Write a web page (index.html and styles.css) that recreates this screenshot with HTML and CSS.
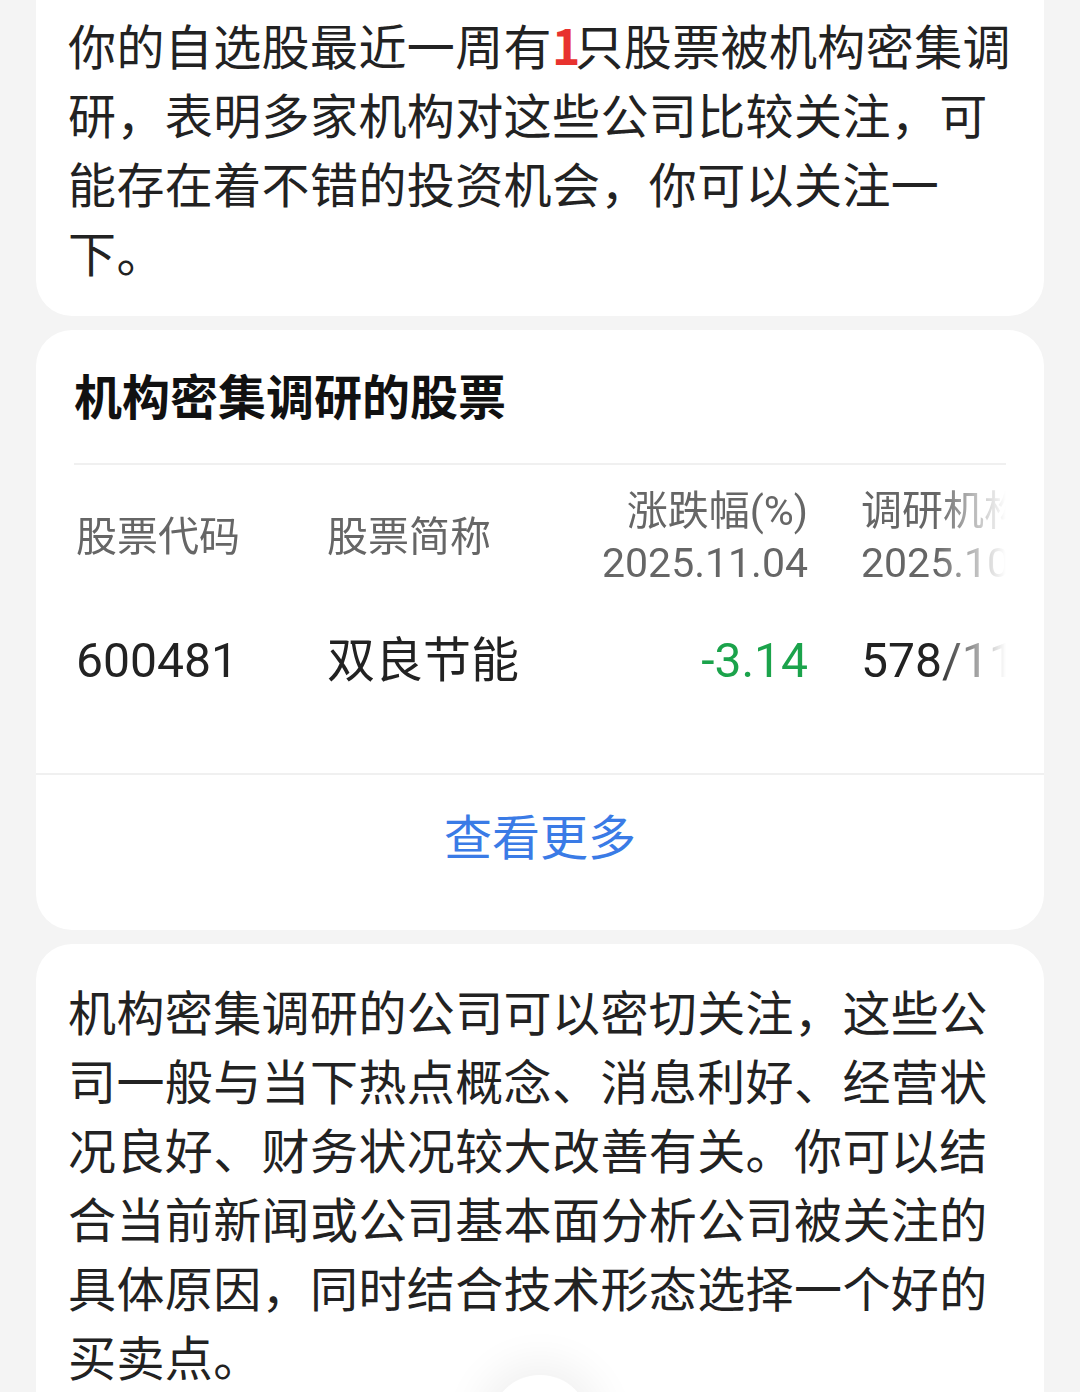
FILE: index.html
```html
<!DOCTYPE html>
<html lang="zh-CN">
<head>
    <meta charset="UTF-8">
    <meta name="viewport" content="width=device-width, initial-scale=1.0">
    <title>机构密集调研</title>
    <link rel="stylesheet" href="styles.css">
</head>
<body>
    <div class="card card-top">
        <p class="text">你的自选股最近一周有<span class="hl">1</span>只股票被机构密集调研，表明多家机构对这些公司比较关注，可能存在着不错的投资机会，你可以关注一下。</p>
    </div>

    <div class="card">
        <h2 class="title">机构密集调研的股票</h2>
        <div class="divider"></div>
        <div class="table-wrap">
            <div class="row head">
                <div class="col c1">股票代码</div>
                <div class="col c2">股票简称</div>
                <div class="col c3">涨跌幅(%)<br>2025.11.04</div>
                <div class="col c4">调研机构数/次数<br>2025.10.28-11.04</div>
            </div>
            <div class="row data">
                <div class="col c1">600481</div>
                <div class="col c2">双良节能</div>
                <div class="col c3 down">-3.14</div>
                <div class="col c4">578/113</div>
            </div>
        </div>
        <div class="more">查看更多</div>
    </div>

    <div class="card card-bottom">
        <p class="text">机构密集调研的公司可以密切关注，这些公司一般与当下热点概念、消息利好、经营状况良好、财务状况较大改善有关。你可以结合当前新闻或公司基本面分析公司被关注的具体原因，同时结合技术形态选择一个好的买卖点。</p>
    </div>

    <div class="fab"></div>
</body>
</html>
```

FILE: styles.css
```css
body {
    font-family: "Noto Sans CJK SC", "Noto Sans", sans-serif;
    background-color: #f4f4f4;
    color: #222;
    margin: 0;
    padding: 0 36px;
}

.card {
    background: #fff;
    border-radius: 36px;
    margin-bottom: 14px;
    overflow: hidden;
}

.card-top {
    border-radius: 0 0 36px 36px;
    padding: 10px 22px 30px 32px;
}

.card-bottom {
    padding: 32px 22px 40px 32px;
}

.text {
    margin: 0;
    font-size: 48px;
    line-height: 69px;
    letter-spacing: 0.4px;
}

.hl {
    color: #e8322e;
    font-weight: bold;
    letter-spacing: -5px;
}

.title {
    margin: 0;
    padding: 30px 38px 0;
    font-size: 48px;
    line-height: 68px;
    font-weight: bold;
    color: #111;
}

.divider {
    height: 2px;
    background: #f0f0f0;
    margin: 35px 38px 0;
}

.table-wrap {
    margin: 0 38px;
    padding: 20px 0 80px;
    overflow: hidden;
    white-space: nowrap;
    -webkit-mask-image: linear-gradient(to right, #000 calc(100% - 70px), transparent);
    mask-image: linear-gradient(to right, #000 calc(100% - 70px), transparent);
}

.row {
    display: flex;
    align-items: center;
    font-family: Roboto, "Noto Sans CJK SC", sans-serif;
}

.row.head {
    font-size: 41px;
    line-height: 52px;
    color: #666;
}

.row.data {
    margin-top: 40px;
    font-size: 48px;
    line-height: 64px;
    color: #222;
}

.c1 {
    width: 253px;
    flex-shrink: 0;
    padding-left: 2px;
    box-sizing: border-box;
}

.c2 {
    width: 200px;
    flex-shrink: 0;
}

.c3 {
    width: 281px;
    flex-shrink: 0;
    text-align: right;
}

.c4 {
    flex-shrink: 0;
    margin-left: 53px;
}

.down {
    color: #1ba34b;
}

.more {
    border-top: 2px solid #f0f0f0;
    text-align: center;
    color: #3a7be6;
    font-size: 48px;
    line-height: 68px;
    padding: 25px 0 62px;
}

.fab {
    position: fixed;
    left: 50%;
    top: 1375px;
    width: 100px;
    height: 100px;
    margin-left: -50px;
    border-radius: 50%;
    background: #fff;
    box-shadow: 0 0 40px 14px rgba(0, 0, 0, 0.06);
}
```
